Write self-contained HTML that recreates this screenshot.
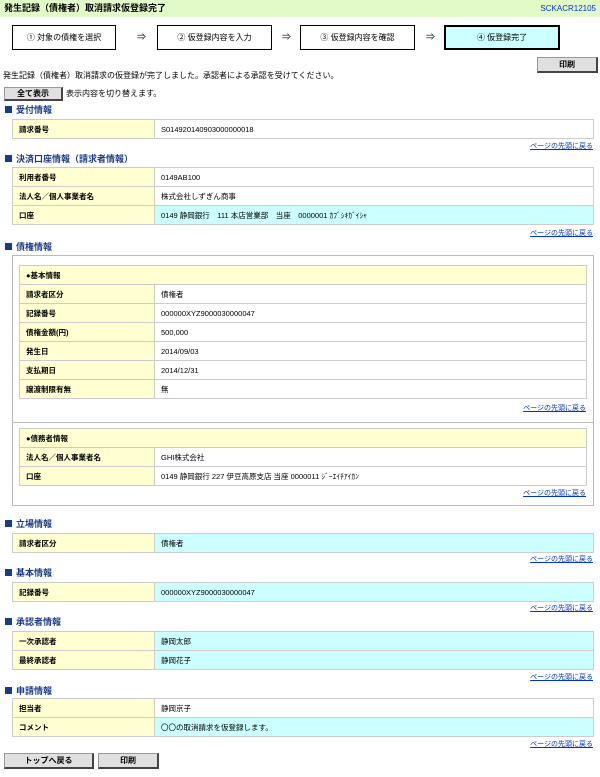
<!DOCTYPE html>
<html><head><meta charset="utf-8"><style>
*{margin:0;padding:0;box-sizing:border-box}
body{width:600px;height:777px;position:relative;background:#fff;font-family:"Liberation Sans","Noto Sans CJK JP",sans-serif;font-size:8px;color:#000;overflow:hidden}
.a{position:absolute}
.title{left:0;top:0;width:600px;height:17px;background:#e2f9c8;font-weight:bold;font-size:9px;line-height:17px;padding-left:4px}
.code{right:4px;top:0;line-height:17px;color:#0033cc;font-size:8px}
.step{height:25px;border:1px solid #000;text-align:center;line-height:23px;font-size:8px;background:#fff}
.arr{font-size:9px;top:30px}
.btn{background:#e0e0e0;border:1px solid #999;border-right:2px solid #444;border-bottom:2px solid #444;text-align:center;font-size:8px;font-weight:bold}
.h{font-weight:bold;color:#1a3a8a;font-size:9px;left:5px}
.h:before{content:"";display:inline-block;width:7px;height:7px;background:#1a3a8a;margin-right:4px;vertical-align:-0px}
table{position:absolute;border-collapse:collapse;border:1px solid #bbb}
td{height:19px;border:1px solid #ccc;padding:0 6px;font-size:7.5px;white-space:nowrap}
td.l{background:#ffffd2;font-weight:bold}
td.c{background:#ccffff}
td.hd{background:#ffffd2;font-weight:bold}
.lk{right:7px;font-size:7px;color:#0033cc;text-decoration:underline}
</style></head><body>
<div class="a title">発生記録（債権者）取消請求仮登録完了</div>
<div class="a code">SCKACR12105</div>
<div class="a step" style="left:12px;top:25px;width:104px">① 対象の債権を選択</div>
<div class="a arr" style="left:137px">⇒</div>
<div class="a step" style="left:157px;top:25px;width:115px">② 仮登録内容を入力</div>
<div class="a arr" style="left:282px">⇒</div>
<div class="a step" style="left:300px;top:25px;width:115px">③ 仮登録内容を確認</div>
<div class="a arr" style="left:426px">⇒</div>
<div class="a step" style="left:444px;top:25px;width:116px;background:#ccffff;border:2px solid #000;line-height:21px">④ 仮登録完了</div>
<div class="a btn" style="left:537px;top:57px;width:61px;height:16px;line-height:13px">印刷</div>
<div class="a" style="left:3px;top:70px">発生記録（債権者）取消請求の仮登録が完了しました。承認者による承認を受けてください。</div>
<div class="a btn" style="left:4px;top:87px;width:59px;height:14px;line-height:11px">全て表示</div>
<div class="a" style="left:66px;top:88px">表示内容を切り替えます。</div>

<div class="a h" style="top:103px">受付情報</div>
<table style="left:12px;top:119px;width:582px"><tr><td class="l" style="width:142px">請求番号</td><td>S014920140903000000018</td></tr></table>
<div class="a lk" style="top:141px">ページの先頭に戻る</div>

<div class="a h" style="top:152px">決済口座情報（請求者情報）</div>
<table style="left:12px;top:167px;width:582px">
<tr><td class="l" style="width:142px">利用者番号</td><td>0149AB100</td></tr>
<tr><td class="l">法人名／個人事業者名</td><td>株式会社しずぎん商事</td></tr>
<tr><td class="l">口座</td><td class="c">0149 静岡銀行　111 本店営業部　当座　0000001 ｶﾌﾞｼｷｶﾞｲｼｬ</td></tr></table>
<div class="a lk" style="top:228px">ページの先頭に戻る</div>

<div class="a h" style="top:240px">債権情報</div>
<div class="a" style="left:12px;top:255px;width:582px;height:251px;border:1px solid #bbb"></div>
<div class="a" style="left:12px;top:422px;width:582px;height:1px;background:#bbb"></div>
<table style="left:19px;top:265px;width:568px">
<tr><td class="hd" colspan="2">●基本情報</td></tr>
<tr><td class="l" style="width:135px">請求者区分</td><td>債権者</td></tr>
<tr><td class="l">記録番号</td><td>000000XYZ9000030000047</td></tr>
<tr><td class="l">債権金額(円)</td><td>500,000</td></tr>
<tr><td class="l">発生日</td><td>2014/09/03</td></tr>
<tr><td class="l">支払期日</td><td>2014/12/31</td></tr>
<tr><td class="l">譲渡制限有無</td><td>無</td></tr></table>
<div class="a lk" style="top:403px;right:14px">ページの先頭に戻る</div>
<table style="left:19px;top:428px;width:568px">
<tr><td class="hd" colspan="2">●債務者情報</td></tr>
<tr><td class="l" style="width:135px">法人名／個人事業者名</td><td>GHI株式会社</td></tr>
<tr><td class="l">口座</td><td>0149 静岡銀行 227 伊豆高原支店 当座 0000011 ｼﾞｰｴｲﾁｱｲｶﾝ</td></tr></table>
<div class="a lk" style="top:488px;right:14px">ページの先頭に戻る</div>

<div class="a h" style="top:517px">立場情報</div>
<table style="left:12px;top:533px;width:582px"><tr><td class="l" style="width:142px">請求者区分</td><td class="c">債権者</td></tr></table>
<div class="a lk" style="top:554px">ページの先頭に戻る</div>

<div class="a h" style="top:566px">基本情報</div>
<table style="left:12px;top:582px;width:582px"><tr><td class="l" style="width:142px">記録番号</td><td class="c">000000XYZ9000030000047</td></tr></table>
<div class="a lk" style="top:603px">ページの先頭に戻る</div>

<div class="a h" style="top:615px">承認者情報</div>
<table style="left:12px;top:631px;width:582px">
<tr><td class="l" style="width:142px">一次承認者</td><td class="c">静岡太郎</td></tr>
<tr><td class="l">最終承認者</td><td class="c">静岡花子</td></tr></table>
<div class="a lk" style="top:672px">ページの先頭に戻る</div>

<div class="a h" style="top:684px">申請情報</div>
<table style="left:12px;top:698px;width:582px">
<tr><td class="l" style="width:142px">担当者</td><td>静岡京子</td></tr>
<tr><td class="l">コメント</td><td class="c">〇〇の取消請求を仮登録します。</td></tr></table>
<div class="a lk" style="top:739px">ページの先頭に戻る</div>

<div class="a btn" style="left:4px;top:753px;width:90px;height:16px;line-height:13px">トップへ戻る</div>
<div class="a btn" style="left:98px;top:753px;width:61px;height:16px;line-height:13px">印刷</div>
</body></html>
